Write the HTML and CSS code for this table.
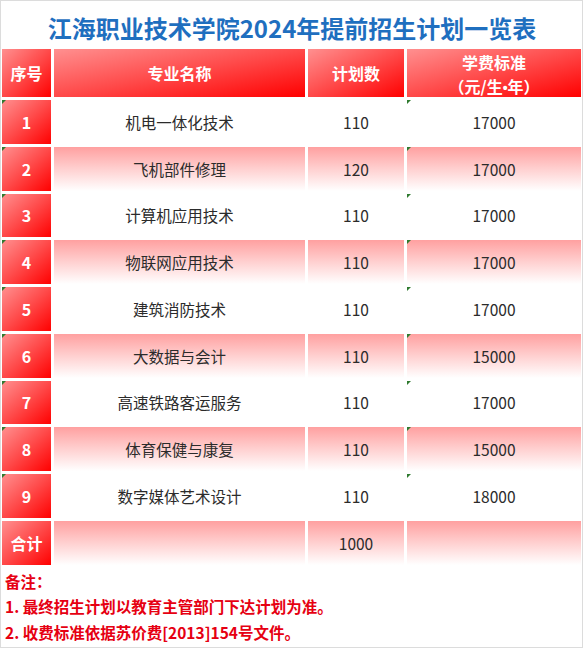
FILE: index.html
```html
<!DOCTYPE html>
<html lang="zh-CN">
<head>
<meta charset="utf-8">
<title>江海职业技术学院2024年提前招生计划一览表</title>
<link rel="stylesheet" href="styles.css">
</head>
<body>
<div class="page">
  <h1 class="title">江海职业技术学院2024年提前招生计划一览表</h1>
  <div class="grid">
    <div class="hd">序号</div>
    <div class="hd">专业名称</div>
    <div class="hd">计划数</div>
    <div class="hd two">学费标准<br>（元/生<span class="dot">•</span>年）</div>

    <div class="no mark">1</div><div class="c">机电一体化技术</div><div class="c">110</div><div class="c mark">17000</div>
    <div class="no mark">2</div><div class="c alt">飞机部件修理</div><div class="c alt">120</div><div class="c alt mark">17000</div>
    <div class="no mark">3</div><div class="c">计算机应用技术</div><div class="c">110</div><div class="c mark">17000</div>
    <div class="no mark">4</div><div class="c alt">物联网应用技术</div><div class="c alt">110</div><div class="c alt mark">17000</div>
    <div class="no mark">5</div><div class="c">建筑消防技术</div><div class="c">110</div><div class="c mark">17000</div>
    <div class="no mark">6</div><div class="c alt">大数据与会计</div><div class="c alt">110</div><div class="c alt mark">15000</div>
    <div class="no mark">7</div><div class="c">高速铁路客运服务</div><div class="c">110</div><div class="c mark">17000</div>
    <div class="no mark">8</div><div class="c alt">体育保健与康复</div><div class="c alt">110</div><div class="c alt mark">15000</div>
    <div class="no mark">9</div><div class="c">数字媒体艺术设计</div><div class="c">110</div><div class="c mark">18000</div>
    <div class="no">合计</div><div class="c alt"></div><div class="c alt">1000</div><div class="c alt"></div>
  </div>
  <div class="notes">
    <p>备注：</p>
    <p>1. 最终招生计划以教育主管部门下达计划为准。</p>
    <p>2. 收费标准依据苏价费[2013]154号文件。</p>
  </div>
</div>
</body>
</html>
```

FILE: styles.css
```css
html, body {
  margin: 0;
  padding: 0;
  background: #ffffff;
}
body {
  font-family: "Noto Sans CJK SC", "Noto Sans", sans-serif;
}
.page {
  width: 580px;
  height: 646px;
  border: 1px solid #dcdcdc;
  padding-left: 1px;
  box-sizing: content-box;
  overflow: hidden;
}
.title {
  margin: 0;
  height: 48px;
  padding-top: 5px;
  box-sizing: border-box;
  display: flex;
  align-items: center;
  justify-content: center;
  font-size: 24px;
  font-weight: 700;
  color: #1f6fbf;
  letter-spacing: 0;
}
.grid {
  display: grid;
  grid-template-columns: 49px 251px 96px 174px;
  grid-template-rows: 48px repeat(10, 43.75px);
  column-gap: 3px;
  row-gap: 3px;
  width: 579px;
}
.hd, .no {
  background: linear-gradient(to bottom right, #ff9090 0%, #ff4a4a 50%, #ff0000 100%);
  color: #ffffff;
  font-weight: 700;
  font-size: 16px;
  display: flex;
  align-items: center;
  justify-content: center;
  text-align: center;
}
.hd.two {
  display: block;
  line-height: 24px;
  padding-top: 1px;
  box-sizing: border-box;
}
.dot {
  font-family: "Liberation Sans", sans-serif;
  font-size: 14px;
}
.c {
  display: flex;
  align-items: center;
  justify-content: center;
  font-size: 15.5px;
  color: #2b2b2b;
  background: #ffffff;
}
.c.alt {
  background: linear-gradient(to bottom, #ffa0a0 0%, #ffd0d0 50%, #ffffff 100%);
}
.mark {
  position: relative;
}
.mark::before {
  content: "";
  position: absolute;
  left: 0;
  top: 0;
  border-top: 4px solid #2f7a2f;
  border-right: 4px solid transparent;
}
.notes {
  padding: 4px 0 0 3px;
  color: #e60012;
  font-weight: 700;
  font-size: 15.5px;
}
.notes p {
  margin: 0;
  line-height: 25.5px;
}
```
